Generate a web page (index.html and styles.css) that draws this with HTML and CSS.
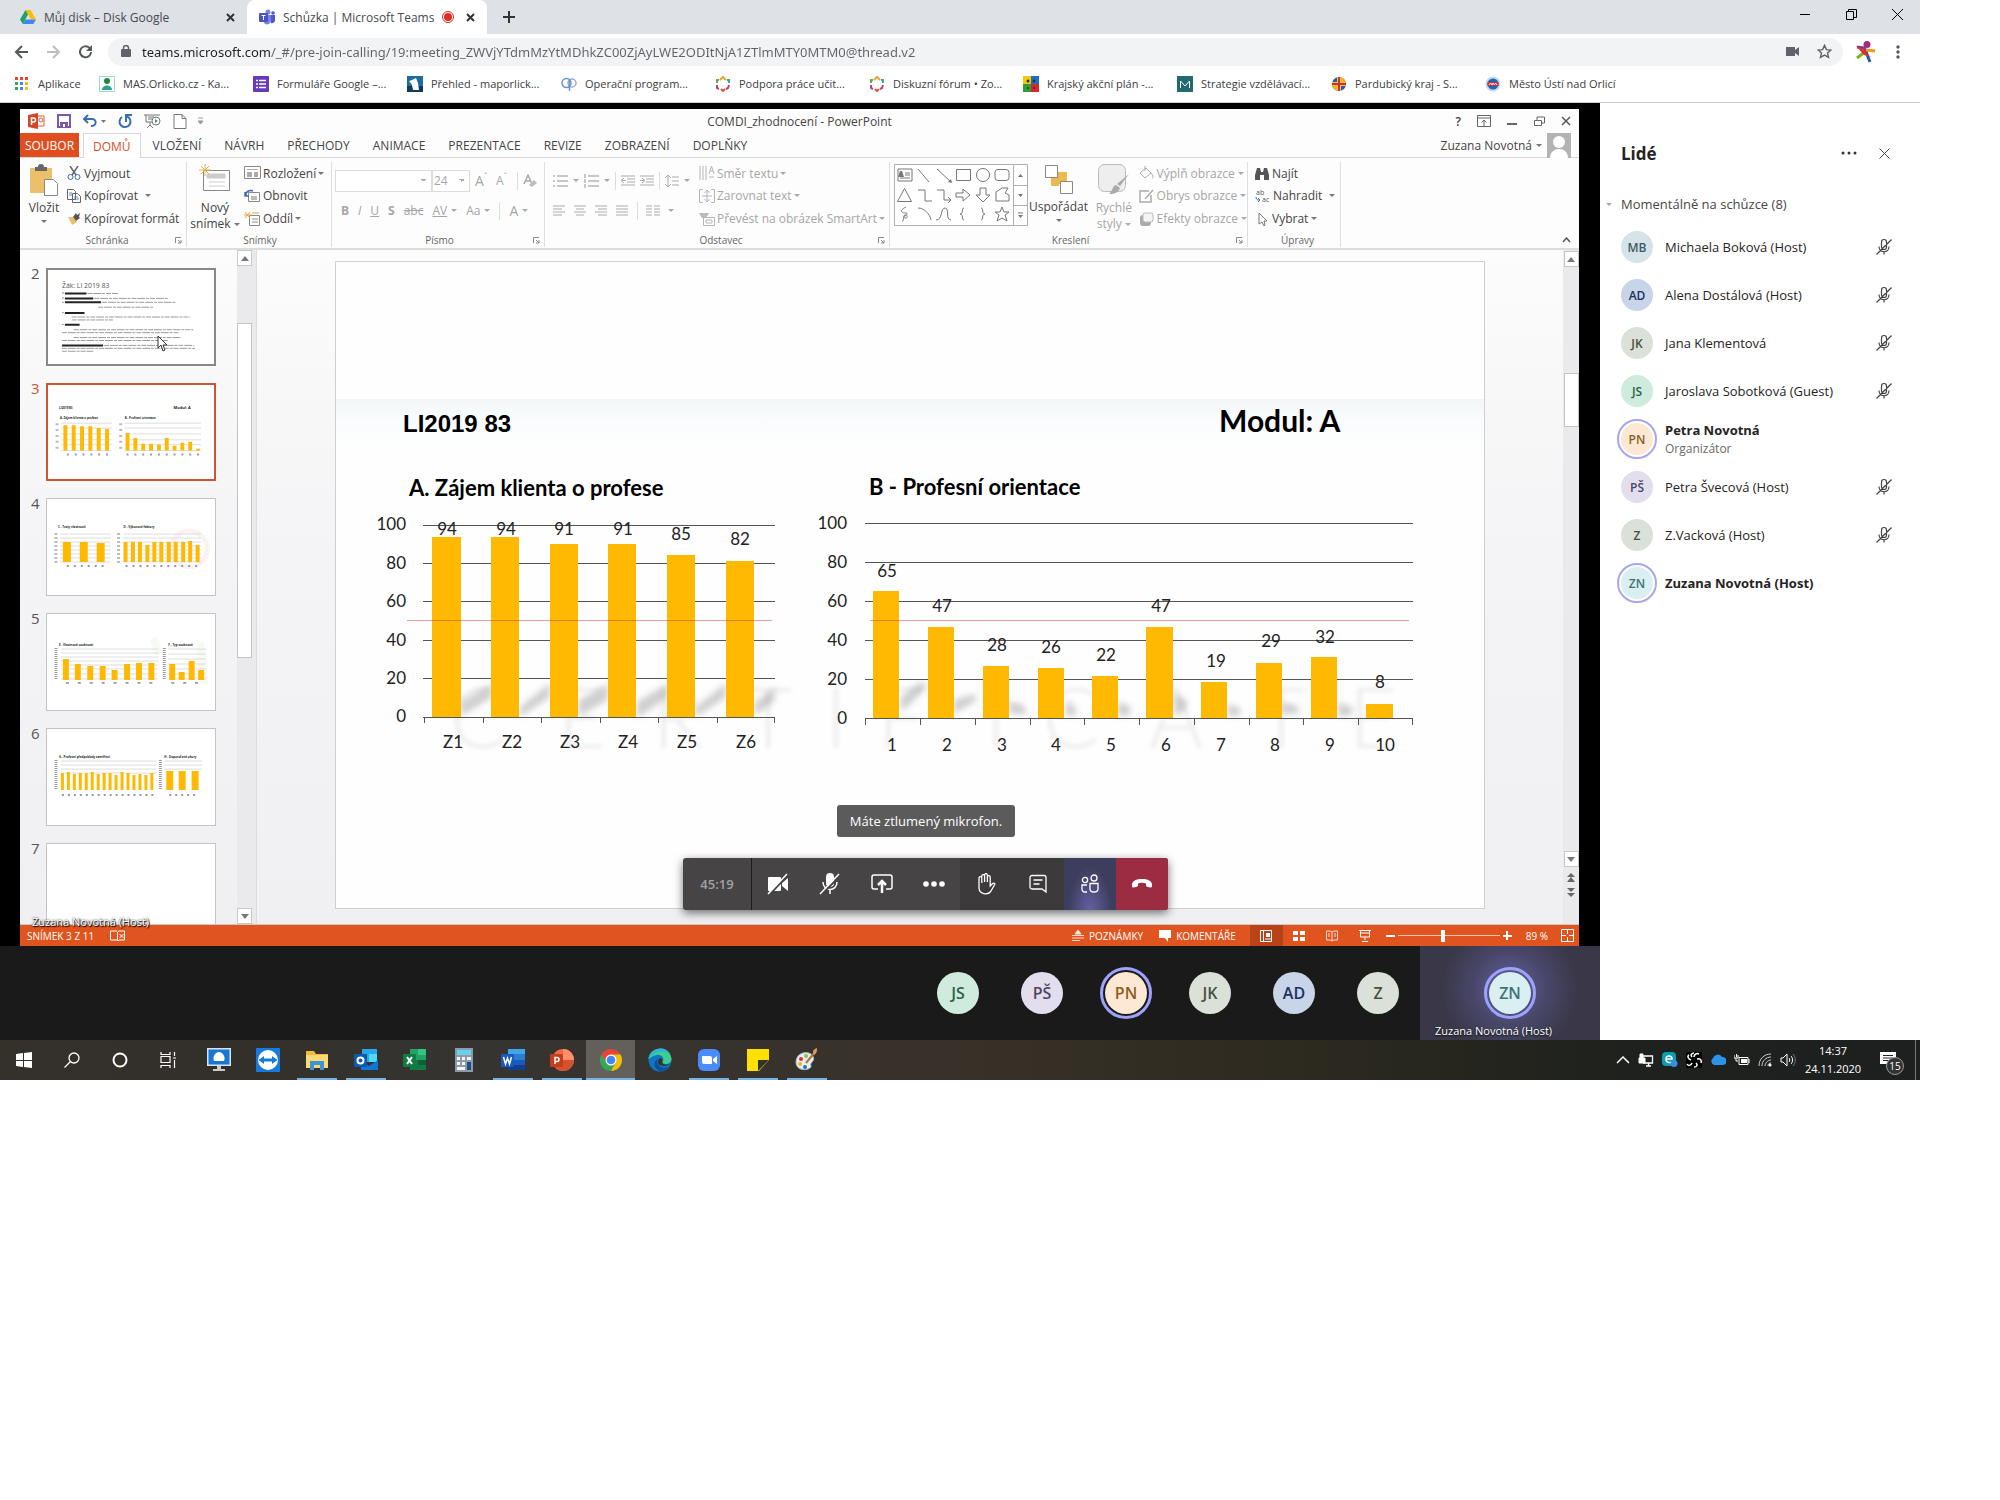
FILE: index.html
```html
<!DOCTYPE html>
<html lang="cs">
<head>
<meta charset="utf-8">
<title>Schůzka | Microsoft Teams</title>
<link rel="stylesheet" href="styles.css">
</head>
<body>
<svg class="defs" aria-hidden="true">
  <symbol id="mic-off" viewBox="0 0 18 18"><path d="M6.500 8V4a2.500 2.500 0 0 1 5 0v5a2.500 2.500 0 0 1-5 0zM4 8.500c0 7 10 7 10 0M9 14v2.500M1.500 16.500l15-15" fill="none" stroke="#444" stroke-width="1.200"/></symbol>
  <symbol id="flower" viewBox="0 0 16 16"><g fill="none" stroke-width="2"><path d="M5 4l3-3 3 3" stroke="#e9a13b"/><path d="M12 4h2v3" stroke="#3aa6a0"/><path d="M14 9l-1 3-2 1" stroke="#c2417c"/><path d="M10 13l-2 2-2-2" stroke="#d8593a"/><path d="M4 13l-2-1V9" stroke="#c2417c"/><path d="M2 7V4h2" stroke="#6aa84f"/></g></symbol>
  <symbol id="launcher" viewBox="0 0 7 7"><path d="M.5 6V.5H6M3 3l3 3M6 3v3H3" fill="none" stroke="#888"/></symbol>
</svg>
<div class="desktop">
  <header class="browser">
    <div class="tabstrip">
      <div class="tab">
        <svg width="16" height="16" viewBox="0 0 16 16"><path d="M5.500 1h5L16 10.500h-5z" fill="#fbbc04"/><path d="M5.500 1L8 5.500 2.800 15 0 10.500z" fill="#1ea362"/><path d="M5.200 10.500H16L13.300 15H2.800z" fill="#4285f4"/></svg>
        <span class="tab-title">Můj disk – Disk Google</span>
        <button class="x" aria-label="Zavřít kartu"><svg width="9" height="9"><path d="M1 1l7 7M8 1l-7 7" stroke="#333" stroke-width="2"/></svg></button>
      </div>
      <div class="tab active">
        <svg width="16" height="16" viewBox="0 0 16 16"><circle cx="9" cy="3" r="2.500" fill="#7b83eb"/><circle cx="14" cy="4" r="1.800" fill="#5059c9"/><path d="M11 6h5v5a3 3 0 0 1-4 3z" fill="#5059c9"/><path d="M5 6h7v6a4 4 0 0 1-7 2z" fill="#7b83eb"/><rect y="4" width="9" height="9" rx="1" fill="#4b53bc"/><path d="M2.500 6.500h4M4.500 6.500V11" stroke="#fff"/></svg>
        <span class="tab-title">Schůzka | Microsoft Teams</span>
        <svg class="rec" width="12" height="12"><circle cx="6" cy="6" r="5.500" fill="#fff" stroke="#d93025"/><circle cx="6" cy="6" r="4" fill="#d93025"/></svg>
        <button class="x" aria-label="Zavřít kartu"><svg width="9" height="9"><path d="M1 1l7 7M8 1l-7 7" stroke="#333" stroke-width="2"/></svg></button>
      </div>
      <button class="newtab" aria-label="Nová karta"><svg width="12" height="12"><path d="M6 0v12M0 6h12" stroke="#333" stroke-width="2"/></svg></button>
      <div class="wincontrols">
        <button aria-label="Minimalizovat"><svg width="11" height="11"><path d="M0 5.500h10" stroke="#000"/></svg></button>
        <button aria-label="Obnovit okno"><svg width="11" height="11"><path d="M.5 2.500h7v8h-7zM2.500 2.500v-2h8v8h-3" fill="none" stroke="#000"/></svg></button>
        <button aria-label="Zavřít okno"><svg width="11" height="11"><path d="M0 0l11 11M11 0L0 11" stroke="#000"/></svg></button>
      </div>
    </div>
    <div class="toolbar">
      <div class="navs">
        <button aria-label="Zpět"><svg width="15" height="14"><path d="M14 7H2M8 1L2 7l6 6" fill="none" stroke="#55585c" stroke-width="2"/></svg></button>
        <button aria-label="Vpřed"><svg width="15" height="14"><path d="M1 7h12M7 1l6 6-6 6" fill="none" stroke="#bcbec1" stroke-width="2"/></svg></button>
        <button aria-label="Načíst znovu"><svg width="15" height="15"><path d="M13 8A5.500 5.500 0 1 1 11 3.500L13 5.500" fill="none" stroke="#55585c" stroke-width="2"/><path d="M14 1v6H8z" fill="#55585c"/></svg></button>
      </div>
      <div class="omnibox">
        <svg width="10" height="13"><rect y="4" width="10" height="8" rx="1" fill="#5f6368"/><path d="M2.500 5V3a2.500 2.500 0 0 1 5 0v2" fill="none" stroke="#5f6368" stroke-width="1.500"/></svg>
        <input class="url" type="text" aria-label="Adresa" value="teams.microsoft.com/_#/pre-join-calling/19:meeting_ZWVjYTdmMzYtMDhkZC00ZjAyLWE2ODItNjA1ZTlmMTY0MTM0@thread.v2">
        <svg width="13" height="9"><path d="M0 0h9v3l4-3v9L9 6v3H0z" fill="#5f6368"/></svg>
        <svg class="star" width="15" height="15" viewBox="0 0 16 16"><path d="M8 1.500l2 4.500 4.800.4-3.600 3.200 1.100 4.700L8 11.800l-4.300 2.500 1.100-4.700L1.200 6.400 6 6z" fill="none" stroke="#5f6368" stroke-width="1.500"/></svg>
      </div>
      <svg class="profile" width="20" height="22" viewBox="0 0 20 22"><path d="M8 6l3 7M8 7L1 6" stroke="#7c3f98" stroke-width="3"/><circle cx="11" cy="3.500" r="3.500" fill="#a3297c"/><path d="M10 9l9 1" stroke="#f39c12" stroke-width="3"/><path d="M9 11l-8 6" stroke="#7ab51d" stroke-width="3"/><path d="M10 11l4 10" stroke="#2659a6" stroke-width="3"/><path d="M0 5l9 4 2 4 4 3-7-2z" fill="#e0312b"/></svg>
      <svg class="kebab" width="4" height="14"><g fill="#55585c"><circle cx="2" cy="2" r="1.700"/><circle cx="2" cy="7" r="1.700"/><circle cx="2" cy="12" r="1.700"/></g></svg>
    </div>
    <nav class="bookmarks">
      <a href="#" class="apps"><svg width="13" height="13"><g><path d="M0 0h3v3H0zM5 0h3v3H5zM10 0h3v3h-3z" fill="#ea4335"/><path d="M0 5h3v3H0zM0 10h3v3H0z" fill="#34a853"/><path d="M5 5h3v3H5zM5 10h3v3H5z" fill="#4285f4"/><path d="M10 5h3v3h-3zM10 10h3v3h-3z" fill="#fbbc04"/></g></svg>Aplikace</a>
      <a href="#"><svg width="16" height="16"><path d="M.5.5h15v15H.5z" fill="#fff" stroke="#9fd3d6"/><circle cx="8" cy="5" r="3" fill="#1a8a3a"/><path d="M3 14c0-6 10-6 10 0z" fill="#2aa09a"/></svg>MAS.Orlicko.cz - Ka...</a>
      <a href="#"><svg width="16" height="16"><rect width="16" height="16" rx="1" fill="#673ab7"/><path d="M3 4.500h2M3 8h2M3 11.500h2M6 4.500h7M6 8h7M6 11.500h7" stroke="#fff" stroke-width="1.500"/></svg>Formuláře Google –...</a>
      <a href="#"><svg width="16" height="16"><path d="M0 0h16v16H0z" fill="#1c6c9c"/><path d="M0 10h16v6H0z" fill="#123a5a"/><path d="M5 4l4-2 2 5 1 7H6L5 9 2 5z" fill="#fff"/></svg>Přehled - maporlick...</a>
      <a href="#"><svg width="16" height="16"><circle cx="5.500" cy="7" r="4.500" fill="none" stroke="#6f93cc" stroke-width="1.500"/><circle cx="11" cy="7" r="4" fill="none" stroke="#8fb0dd" stroke-width="1.500"/><path d="M8.500 3v12" stroke="#6f93cc" stroke-width="1.500"/></svg>Operační program...</a>
      <a href="#"><svg width="16" height="16"><use href="#flower"/></svg>Podpora práce učit...</a>
      <a href="#"><svg width="16" height="16"><use href="#flower"/></svg>Diskuzní fórum • Zo...</a>
      <a href="#"><svg width="16" height="16"><path d="M0 0h8v8H0z" fill="#f2c80f"/><path d="M8 0h8v8H8z" fill="#1f6fc0"/><path d="M0 8h8v8H0z" fill="#2f9e3a"/><path d="M8 8h8v8H8z" fill="#d8262c"/><g fill="#333"><circle cx="5" cy="5" r="1.500"/><circle cx="11" cy="5" r="1.500"/><circle cx="5" cy="12" r="1"/><circle cx="11" cy="12" r="1"/></g></svg>Krajský akční plán -...</a>
      <a href="#"><svg width="16" height="16"><path d="M0 0h16v16H0z" fill="#216a72"/><path d="M3.500 12V5L8 10l4.500-5v7" fill="none" stroke="#fff"/></svg>Strategie vzdělávací...</a>
      <a href="#"><svg width="16" height="16"><circle cx="8" cy="8" r="7" fill="#2262a8"/><path d="M8 1a7 7 0 0 1 7 7H8zM8 15a7 7 0 0 1-7-7h7z" fill="#f0b323"/><path d="M8 1v14M1 8h14" stroke="#f3c84a" stroke-width="4"/><path d="M8 1v14M1 8h14" stroke="#cf2e2e" stroke-width="2"/></svg>Pardubický kraj - S...</a>
      <a href="#"><svg width="16" height="16"><circle cx="8" cy="8" r="7.500" fill="#bcdcf2"/><circle cx="8" cy="8" r="5.500" fill="#2a62ad"/><path d="M2.500 6h11v4h-11z" fill="#cf2e3e"/><path d="M4 9l1.500-2L7 9l1-2 1.500 2 1-2L12 9" stroke="#fff" fill="none"/></svg>Město Ústí nad Orlicí</a>
    </nav>
  </header>

  <main class="meeting">
    <section class="stage">
      <div class="share">
        <div class="pp-title">
          <div class="qat">
            <svg width="18" height="16"><path d="M9 3h7v10H9z" fill="#fff" stroke="#d9603a"/><path d="M0 2l10-2v16L0 14z" fill="#d24726"/><path d="M3.500 12V5h2a2 2 0 0 1 0 4h-2" fill="none" stroke="#fff" stroke-width="1.500"/><circle cx="13" cy="7" r="2" fill="none" stroke="#d9603a"/></svg>
            <svg width="14" height="14"><path d="M1 1h12v12H1z" fill="none" stroke="#7a5ba5" stroke-width="2"/><path d="M3 8h8v5H3z" fill="#7a5ba5"/><path d="M6 10h2v3H6z" fill="#fff"/></svg>
            <svg width="24" height="14"><path d="M2 5h8c5 0 5 7-1 7M6 1L2 5l4 4" fill="none" stroke="#3b6eb0" stroke-width="2"/><path d="M19 6h5l-2.500 3z" fill="#777"/></svg>
            <svg width="16" height="15"><path d="M10 2.500A5.500 5.500 0 1 1 5 3" fill="none" stroke="#3b6eb0" stroke-width="2"/><path d="M9 8V1h6" fill="none" stroke="#3b6eb0" stroke-width="2"/></svg>
            <svg width="18" height="15"><path d="M0 1h16M2 1v7h7M6 8v4M3 14l3-3 3 3M4 3h6M4 5h4" fill="none" stroke="#777"/><circle cx="12" cy="7" r="4" fill="#fff" stroke="#777"/><path d="M11 5l3 2-3 2z" fill="#4a9a6a"/></svg>
            <svg width="14" height="15"><path d="M1 .5h8l4 4v10H1zM9 .5v4h4" fill="#fff" stroke="#777"/></svg>
            <svg width="6" height="8"><path d="M0 1h5M0 4h5L2.500 7z" stroke="#999" fill="#999"/></svg>
          </div>
          <span class="pp-name">COMDI_zhodnocení - PowerPoint</span>
          <div class="pp-win">
            <span class="q">?</span>
            <svg width="14" height="12"><path d="M.5.5h13v11H.5zM.5 3h13M7 11V5M4.500 7.500L7 5l2.500 2.500" fill="none" stroke="#666"/></svg>
            <svg width="11" height="12"><path d="M0 9h10" stroke="#666" stroke-width="2"/></svg>
            <svg width="11" height="11"><path d="M.5 4.500h7v5h-7zM3 4V1h7.500v6H8" fill="none" stroke="#666"/></svg>
            <svg width="10" height="10"><path d="M1 1l8 8M9 1L1 9" stroke="#555" stroke-width="1.500"/></svg>
          </div>
        </div>
        <nav class="pp-tabs">
          <button class="file">SOUBOR</button><button class="on">DOMŮ</button><button>VLOŽENÍ</button><button>NÁVRH</button><button>PŘECHODY</button><button>ANIMACE</button><button>PREZENTACE</button><button>REVIZE</button><button>ZOBRAZENÍ</button><button>DOPLŇKY</button>
          <div class="user">Zuzana Novotná <i class="caret"></i><svg width="24" height="25"><path d="M0 0h24v25H0z" fill="#b3b3b3"/><circle cx="12" cy="9" r="6" fill="#fff"/><path d="M3 25c0-12 18-12 18 0z" fill="#fff"/></svg></div>
        </nav>
        <div class="ribbon">
          <section class="group g-clip">
            <div class="cols">
              <button class="big"><svg width="30" height="32"><path d="M1 4h22v25H1z" fill="#ecc06a"/><path d="M6 3h3a3 3 0 0 1 6 0h3v4H6z" fill="#666"/><path d="M15.500 15.500h9l4 4v12h-13z" fill="#fff" stroke="#888"/></svg>Vložit<i class="caret"></i></button>
              <div class="list">
                <button><svg width="14" height="14"><path d="M3 0l6 9M11 0L5 9" stroke="#666" stroke-width="1.500"/><circle cx="3.500" cy="11" r="2.500" fill="none" stroke="#3b6eb0"/><circle cx="10.500" cy="11" r="2.500" fill="none" stroke="#3b6eb0"/></svg>Vyjmout</button>
                <button><svg width="14" height="14"><path d="M.5.5h6l2 2v8h-8zM5.500 4.500h5l3 3v6h-8z" fill="#fff" stroke="#666"/><path d="M7 8h4M7 10h5M2 4h3M2 6h3" stroke="#5c8ac0"/></svg>Kopírovat <i class="caret far"></i></button>
                <button><svg width="14" height="14"><path d="M1 5l5 0 4 5-5 3z" fill="#ecc06a"/><path d="M6 5l3-4 1 2 3-2-1 4 1 1-4 3z" fill="#555"/></svg>Kopírovat formát</button>
              </div>
            </div>
            <footer>Schránka<svg class="launch" width="7" height="7"><use href="#launcher"/></svg></footer>
          </section>
          <section class="group g-slides">
            <div class="cols">
              <button class="big two"><svg width="32" height="32"><path d="M4.500 6.500h26v20h-26z" fill="#fff" stroke="#888"/><path d="M8 10h18v4H8zM10 18h16M10 22h16" fill="#ccc" stroke="#ccc"/><path d="M6 0v12M0 6h12M2 2l8 8M10 2l-8 8" stroke="#e5b24a"/></svg><span>Nový<br>snímek <i class="caret"></i></span></button>
              <div class="list">
                <button><svg width="17" height="14"><path d="M.5.5h16v12H.5z" fill="#fff" stroke="#888"/><path d="M3 3h11v1H3zM3 6h5v5H3zM10 6h4v5h-4z" fill="#aaa"/></svg>Rozložení <i class="caret"></i></button>
                <button><svg width="17" height="14"><path d="M4.500 3.500h11v9h-11z" fill="#fff" stroke="#888"/><path d="M7 7h6v4H7z" fill="#bbb"/><path d="M2 7C1 2 6 1 9 2M1 3v4h4" fill="none" stroke="#3b6eb0" stroke-width="1.500"/></svg>Obnovit</button>
                <button><svg width="17" height="14"><path d="M5.500 3.500h10v10h-10zM8 7h6M8 10h6" fill="#fff" stroke="#888"/><path d="M0 3h8M1 0l5 6M6 0L1 6M8 1h7" stroke="#e5a23a"/></svg>Oddíl <i class="caret"></i></button>
              </div>
            </div>
            <footer>Snímky</footer>
          </section>
          <section class="group g-font dim">
            <div class="rows">
              <div class="r"><select class="font" aria-label="Písmo"><option></option></select><select class="size" aria-label="Velikost písma"><option>24</option></select><span class="ic w1">A<sup>ˆ</sup></span><span class="ic w1 sm">A<sup>ˇ</sup></span><i class="bar"></i><svg width="14" height="14"><path d="M1 10L5 1l4 9M2.500 7h5" fill="none" stroke="#aaa" stroke-width="1.500"/><path d="M6 11l5-5 3 3-5 4z" fill="#bbb"/></svg></div>
              <div class="r r2"><b>B</b><em>I</em><u>U</u><b>S</b><s>abc</s><span class="av">AV</span><i class="caret"></i><span>Aa</span><i class="caret"></i><i class="bar"></i><span class="big-a">A</span><i class="caret"></i></div>
            </div>
            <footer>Písmo<svg class="launch" width="7" height="7"><use href="#launcher"/></svg></footer>
          </section>
          <section class="group g-para dim">
            <div class="cols">
              <div class="rows">
                <div class="r"><svg width="15" height="14"><path d="M0 2h2M0 7h2M0 12h2M4 2h11M4 7h11M4 12h11" stroke="#b5b5b5" stroke-width="1.500"/></svg><i class="caret"></i><svg width="15" height="14"><path d="M1 0v4M1 5v4M1 10v4M4 2h11M4 7h11M4 12h11" stroke="#b5b5b5" stroke-width="1.500"/></svg><i class="caret"></i><i class="bar"></i><svg width="14" height="11"><path d="M0 1h14M6 4h8M6 7h8M0 10h14M5 5.500H1M3 3L0 5.500 3 8" fill="none" stroke="#aaa"/></svg><svg width="14" height="11"><path d="M0 1h14M6 4h8M6 7h8M0 10h14M0 5.500h4M2 3l3 2.500L2 8" fill="none" stroke="#aaa"/></svg><i class="bar"></i><svg width="14" height="14"><path d="M3 1v12M0 4l3-3 3 3M0 10l3 3 3-3M7 3h7M7 7h7M7 11h7" fill="none" stroke="#aaa"/></svg><i class="caret"></i></div>
                <div class="r r3"><svg width="13" height="11"><path d="M0 1h12M0 4h9M0 7h12M0 10h9" stroke="#aaa"/></svg><svg width="13" height="11"><path d="M0 1h12M2 4h8M0 7h12M2 10h8" stroke="#aaa"/></svg><svg width="13" height="11"><path d="M0 1h12M3 4h9M0 7h12M3 10h9" stroke="#aaa"/></svg><svg width="13" height="11"><path d="M0 1h12M0 4h12M0 7h12M0 10h12" stroke="#aaa"/></svg><i class="bar"></i><svg width="14" height="11"><path d="M0 1h6M0 4h6M0 7h6M0 10h6M8 1h6M8 4h6M8 7h6M8 10h6" stroke="#aaa"/></svg><i class="caret"></i></div>
              </div>
              <div class="list">
                <button><svg width="16" height="16"><path d="M1 1v14M4 1v14M7 1v14M10 9l2.500-8L15 9M11 6h3M10 12h5" fill="none" stroke="#b5b5b5"/></svg>Směr textu <i class="caret"></i></button>
                <button><svg width="16" height="14"><path d="M4 .5H.5v13H4M12 .5h3.500v13H12M8 1v12M5.500 4L8 1l2.500 3M5.500 10L8 13l2.500-3M3 7h10" fill="none" stroke="#b5b5b5"/></svg>Zarovnat text <i class="caret"></i></button>
                <button><svg width="16" height="14"><path d="M0 1h10l-3 5H3z" fill="#bbb"/><path d="M4.500 5.500h11v8h-11zM7 8h6v3H7z" fill="#fff" stroke="#b5b5b5"/></svg>Převést na obrázek SmartArt <i class="caret"></i></button>
              </div>
            </div>
            <footer>Odstavec<svg class="launch" width="7" height="7"><use href="#launcher"/></svg></footer>
          </section>
          <section class="group g-draw">
            <div class="cols">
              <svg class="gallery" width="134" height="62"><path d="M.5.5h133v61H.5zM119.500.5v61M119.500 21.500h14M119.500 41.500h14" fill="#fff" stroke="#b0b0b0"/><g fill="none" stroke="#777"><path d="M4 5h14v12H4zM11 9h5M11 11h5M6 14h10M24 5l11 13M43 5l14 13M62.500 5.500h14v11h-14zM104 5.500h8a3 3 0 0 1 3 3v5a3 3 0 0 1-3 3h-8a3 3 0 0 1-3-3v-5a3 3 0 0 1 3-3z"/><circle cx="89" cy="11" r="6.500"/><path d="M3.500 37.500h14l-7-13zM24 26h7v11h7M43 26h7v10h6M54 33l3 3-3 3M62 29h7v-4l7 6-7 6v-4h-7zM86 24v7h-4l7 7 7-7h-4v-7zM102 37V28l6-4h6l-3 5 4 2v6z"/><path d="M12 43c-8 4-4 6 0 6s-4 4-1 5 3-4 0-3 0 6-3 6M24 44c6 0 12 6 13 12M42 56c7 0 4-12 9-12s0 12 6 12M70 44c-3 0 0 6-4 6 4 0 1 6 4 6M87 44c3 0 0 6 4 6-4 0-1 6-4 6M108 43l2 5h5l-4 3 2 6-5-3-5 3 2-6-4-3h5z"/></g><path d="M6 7h2l2 6H4zM124 13h5l-2.500-3zM124 30h5l-2.500 3zM124 51h5l-2.500 3zM124 48.500h5v1h-5zM54 18l4 1-1-4z" fill="#777"/></svg>
              <button class="big arrange"><svg width="30" height="31"><path d="M13 8h10v12H13zM7 14h8v8H7z" fill="#ecb94f"/><path d="M1.500 1.500h12v12h-12zM16.500 17.500h12v12h-12z" fill="#fff" stroke="#888"/></svg>Uspořádat<i class="caret"></i></button>
              <button class="big two dim"><svg width="32" height="32"><rect x=".5" y=".5" width="27" height="27" rx="6" fill="#eee" stroke="#bbb"/><path d="M31 10l-9 12-3-2zM18 21l4 3c-2 6-8 6-11 6 4-3 3-8 7-9z" fill="#aaa"/></svg><span>Rychlé<br>styly <i class="caret"></i></span></button>
              <div class="list dim">
                <button><svg width="15" height="14"><path d="M7 2l5 5-6 5-5-5zM6 0v5M12 7c3 3 2 5 1 5" fill="none" stroke="#aaa"/></svg>Výplň obrazce <i class="caret"></i></button>
                <button><svg width="15" height="14"><path d="M10 2H1v11h11V6M14 1L6 10" fill="none" stroke="#aaa" stroke-width="1.500"/></svg>Obrys obrazce <i class="caret"></i></button>
                <button><svg width="15" height="14"><rect x="1" y="3" width="11" height="11" rx="3" fill="#aaa"/><rect x="4" y="1" width="10" height="9" rx="2" fill="#f4f4f4" stroke="#bbb"/></svg>Efekty obrazce <i class="caret"></i></button>
              </div>
            </div>
            <footer>Kreslení<svg class="launch" width="7" height="7"><use href="#launcher"/></svg></footer>
          </section>
          <section class="group g-edit">
            <div class="cols">
              <div class="list">
                <button><svg width="14" height="13"><path d="M2 1h3l1 4h2l1-4h3l2 7v5H9V8H5v5H0V8z" fill="#555"/></svg>Najít</button>
                <button><svg width="15" height="18"><text x="1" y="8" font-size="7" fill="#555">ab</text><text x="7" y="15" font-size="7" fill="#555">ac</text><path d="M1 10c0 3 2 3 4 3M3 11l2 2-2 2" fill="none" stroke="#3b6eb0"/></svg>Nahradit <i class="caret far"></i></button>
                <button><svg width="14" height="14"><path d="M4 1v11l3-2 2 4 1-1-1-4h3z" fill="#fff" stroke="#777"/></svg>Vybrat <i class="caret"></i></button>
              </div>
            </div>
            <footer>Úpravy</footer>
          </section>
          <button class="collapse" aria-label="Sbalit pás karet"><svg width="9" height="6"><path d="M1 5l3.500-4L8 5" fill="none" stroke="#555" stroke-width="1.500"/></svg></button>
        </div>

        <div class="work">
          <div class="thumbs">
            <ol start="2">
              <li><span>2</span><svg class="hover" viewBox="0 0 169 96"><text class="th" x="14" y="18">Žák: LI 2019 83</text><g stroke="#222" stroke-width="2"><path d="M17 24h22M17 29h29M17 33h37M17 44h20M17 56h15M14 77h42"/></g><g stroke="#999" stroke-dasharray="5 1 8 1 3 1"><path d="M40 24h31M47 29h75M55 33h75M51 38h57M24 48h121M24 51h42M26 61h122M14 64h120M26 69h110M14 72h108M57 77h92M14 80h136M14 83h32"/></g><g fill="#555"><circle cx="15" cy="23.500" r=".7"/><circle cx="15" cy="28.500" r=".7"/><circle cx="15" cy="33" r=".7"/><circle cx="15" cy="43.500" r=".7"/><circle cx="15" cy="55.500" r=".7"/></g></svg></li>
              <li class="sel"><span>3</span><svg viewBox="0 0 169 96"><text class="ts" x="11" y="25">LI2019 83</text><text class="tm" x="128" y="25">Modul: A</text><text class="ts" x="12" y="35">A. Zájem klienta o profese</text><text class="ts" x="78" y="35">B - Profesní orientace</text><path d="M13 39h52M13 44h52M13 50h52M13 56h52M13 61h52M13 67h52M78 39h78M78 44h78M78 50h78M78 56h78M78 61h78M78 67h78" stroke="#ddd"/><path d="M17.500 67V41M26 67V41M34.500 67V42M43 67V42M51.500 67V44M60 67V45" stroke="#ffb900" stroke-width="4"/><path d="M81 67V49M89 67V54M97 67V60M105 67V60M113 67V61M121 67V54M129 67V62M137 67V59M145 67V58M153 67V65" stroke="#ffb900" stroke-width="4"/><path d="M9 39v29M74 39v29" stroke="#bbb" stroke-dasharray="2 4" stroke-width="3"/><path d="M19 71h46M80 71h76" stroke="#999" stroke-dasharray="2 6" stroke-width="2"/></svg></li>
              <li><span>4</span><svg viewBox="0 0 169 96"><circle cx="143" cy="50" r="18" fill="none" stroke="#fbf2f2" stroke-width="5"/><text class="ts" x="11" y="29">C - Testy vlastností</text><text class="ts" x="77" y="29">D - Výkonové faktory</text><path d="M13 35h51M13 39h51M13 43h51M13 47h51M13 51h51M13 55h51M13 59h51M13 63h51M77 35h78M77 39h78M77 43h78M77 47h78M77 51h78M77 55h78M77 59h78M77 63h78" stroke="#ddd"/><path d="M20 63V43M37 63V43M54 63V44" stroke="#ffb900" stroke-width="8"/><path d="M79 63V43M86.500 63V43M93.500 63V43M101 63V46M108 63V43M115 63V43M122.500 63V43M129.500 63V43M137 63V43M144 63V42M151.500 63V46" stroke="#ffb900" stroke-width="4"/><path d="M9 34v30M72 34v30" stroke="#bbb" stroke-dasharray="2 2" stroke-width="3"/><path d="M20 67h38M79 67h75" stroke="#999" stroke-dasharray="2 5" stroke-width="2"/></svg></li>
              <li><span>5</span><svg viewBox="0 0 169 96"><path d="M107 24l6 16M154 28l4 42" stroke="#f5faf3" stroke-width="8"/><text class="ts" x="12" y="32">E - Vlastnosti osobnosti</text><text class="ts" x="122" y="32">F - Typ osobnosti</text><path d="M14 35h98M14 39h98M14 43h98M14 47h98M14 51h98M14 55h98M14 60h98M14 65h98M122 35h38M122 40h38M122 45h38M122 50h38M122 55h38M122 60h38M122 65h38" stroke="#ddd"/><path d="M19 66V45M31 66V50M43.500 66V52M56 66V52M68 66V56M80.500 66V50M92.500 66V49M105 66V49M126 66V50M135.500 66V58M145.500 66V47M155 66V56" stroke="#ffb900" stroke-width="6"/><path d="M9 34v32M118 34v32" stroke="#999" stroke-dasharray="1 1" stroke-width="3"/><path d="M19 69h90M125 69h34" stroke="#999" stroke-dasharray="3 9" stroke-width="2"/></svg></li>
              <li><span>6</span><svg viewBox="0 0 169 96"><text class="ts" x="12" y="29">G - Profesní předpoklady zaměření</text><text class="ts" x="118" y="29">H - Doporučené obory</text><path d="M14 32h96M14 36h96M14 40h96M14 44h96M118 32h38M118 36h38M118 40h38" stroke="#ddd"/><path d="M15.500 61V44M21.500 61V43M27.500 61V45M33.500 61V44M39.500 61V44M45.500 61V43M51.500 61V45M57.500 61V44M63.500 61V44M69.500 61V46M75.500 61V43M81.500 61V44M87.500 61V46M93.500 61V45M99.500 61V46M105.500 61V44" stroke="#ffb900" stroke-width="3"/><path d="M123.500 61V42M136 61V42M149 61V42" stroke="#ffb900" stroke-width="7"/><path d="M9 31v30M114 31v30" stroke="#999" stroke-dasharray="1 1" stroke-width="3"/><path d="M15 66h92M123 66h28" stroke="#999" stroke-dasharray="2 4" stroke-width="2"/></svg></li>
              <li><span>7</span><svg viewBox="0 0 169 96"></svg></li>
            </ol>
            <svg class="cursor" width="11" height="17"><path d="M1 1v12l3-3 2 6 2-1-2-5h4z" fill="#fff" stroke="#333"/></svg>
          </div>
          <div class="vscroll left"><button aria-label="Nahoru"><svg width="8" height="5"><path d="M0 5h8L4 0z" fill="#777"/></svg></button><i class="grip"></i><button class="end" aria-label="Dolů"><svg width="8" height="5"><path d="M0 0h8L4 5z" fill="#777"/></svg></button></div>
          <div class="canvas">
            <svg class="slide" viewBox="0 0 1148 646">
              <defs>
                <linearGradient id="band" x2="0" y2="1"><stop offset="0" stop-color="#f3f5f6"/><stop offset=".3" stop-color="#f8fbfc"/><stop offset="1" stop-color="#fefefe"/></linearGradient>
                <filter id="soft"><feGaussianBlur stdDeviation="3"/></filter>
                <filter id="softer"><feGaussianBlur stdDeviation="2"/></filter>
              </defs>
              <rect width="1148" height="646" fill="#fefefe"/>
              <rect y="137" width="1148" height="50" fill="url(#band)"/>
              <g class="ghost" filter="url(#softer)"><text x="142" y="486">C</text><text x="246" y="486">E</text><text x="342" y="486">R</text><text x="432" y="486">T</text><text x="500" y="486">I</text><text x="565" y="486">F</text><text x="660" y="486">I</text><text x="735" y="486">C</text><text x="840" y="486">A</text><text x="945" y="486">T</text><text x="1037" y="486">E</text></g>
              <g class="shade" filter="url(#soft)"><path d="M125 440l30-18v14l-30 18zM184 445l30-24v14l-30 20zM243 438l29-16v16l-29 16zM301 440l30-18v14l-30 20zM360 445l30-24v14l-30 20zM419 440l20-14v12l-20 16z"/><path d="M564 436l20-16 8 4-26 26zM618 438l20-6 3 6-23 14zM672 440l14 2 6 10H674zM730 438l10 8v8h-10zM782 440l12 4v10h-12zM838 432l14 8-6 12h-8zM892 442l12 4v8h-12zM946 440l16 4v8h-16zM1002 440l16 6-4 8h-12z"/></g>
              <g class="grid"><path d="M87 263.500h352M87 301.500h352M87 339.500h352M87 378.500h352M87 416.500h352M87 455.500h352M88.500 455v6M147.500 455v6M205.500 455v6M264.500 455v6M322.500 455v6M381.500 455v6M438.500 455v6"/><path d="M529 261.500h548M529 300.500h548M529 339.500h548M529 378.500h548M529 417.500h548M529 456.500h548M529.500 456v7M584.500 456v7M639.500 456v7M694.500 456v7M748.500 456v7M803.500 456v7M858.500 456v7M913.500 456v7M967.500 456v7M1022.500 456v7M1076.500 456v7"/></g>
              <g fill="#ffb900"><path d="M96 275h29v180H96zM155 275h28v180h-28zM214 282h28v173h-28zM272 282h28v173h-28zM331 293h28v162h-28zM390 299h28v156h-28z"/><path d="M537 329h26v127h-26zM592 365h26v91h-26zM647 404h26v52h-26zM702 406h26v50h-26zM756 414h26v42h-26zM810 365h27v91h-27zM865 420h26v36h-26zM920 401h26v55h-26zM975 395h26v61h-26zM1030 442h27v14h-27z"/></g>
              <path d="M71 358.500h365M534 358.500h539" stroke="#d0403a" stroke-opacity=".5"/>
              <text class="s-id" x="67" y="170">LI2019 83</text><text class="s-mod" x="883" y="170">Modul: A</text>
              <text class="s-h" x="73" y="234">A. Zájem klienta o profese</text><text class="s-h" x="533" y="233">B - Profesní orientace</text>
              <g class="lab end"><text x="70" y="268">100</text><text x="70" y="307">80</text><text x="70" y="345">60</text><text x="70" y="384">40</text><text x="70" y="422">20</text><text x="70" y="460">0</text><text x="511" y="267">100</text><text x="511" y="306">80</text><text x="511" y="345">60</text><text x="511" y="384">40</text><text x="511" y="423">20</text><text x="511" y="462">0</text></g>
              <g class="lab"><text x="111" y="273">94</text><text x="170" y="273">94</text><text x="228" y="273">91</text><text x="287" y="273">91</text><text x="345" y="278">85</text><text x="404" y="283">82</text>
              <text x="117" y="486">Z1</text><text x="176" y="486">Z2</text><text x="234" y="486">Z3</text><text x="292" y="486">Z4</text><text x="351" y="486">Z5</text><text x="410" y="486">Z6</text>
              <text x="551" y="315">65</text><text x="606" y="350">47</text><text x="661" y="389">28</text><text x="715" y="391">26</text><text x="770" y="399">22</text><text x="825" y="350">47</text><text x="880" y="405">19</text><text x="935" y="385">29</text><text x="989" y="381">32</text><text x="1044" y="426">8</text>
              <text x="556" y="489">1</text><text x="611" y="489">2</text><text x="666" y="489">3</text><text x="720" y="489">4</text><text x="775" y="489">5</text><text x="830" y="489">6</text><text x="885" y="489">7</text><text x="939" y="489">8</text><text x="994" y="489">9</text><text x="1049" y="489">10</text></g>
            </svg>
          </div>
          <div class="vscroll right"><button aria-label="Nahoru"><svg width="8" height="5"><path d="M0 5h8L4 0z" fill="#777"/></svg></button><i class="grip"></i><button class="end" aria-label="Dolů"><svg width="8" height="5"><path d="M0 0h8L4 5z" fill="#777"/></svg></button><svg class="pg" width="8" height="9"><path d="M0 4h8L4 0zM0 9h8L4 4z" fill="#666"/></svg><svg class="pg" width="8" height="9"><path d="M0 0h8L4 4zM0 5h8L4 9z" fill="#666"/></svg></div>
        </div>
        <div class="status">
          <span>SNÍMEK 3 Z 11</span>
          <svg width="15" height="12"><path d="M7 1H.5v9H7l1 1 1-1h5.500V1H9L7.500 2v9M9.500 4l4 4M13.500 4l-4 4" fill="none" stroke="#fff"/></svg>
          <div class="st-right">
            <button class="notes"><svg width="12" height="12"><path d="M3 4h6L6 0zM0 5.500h12M0 8h12M0 10.500h8" fill="#fff" stroke="#fbd9cc"/></svg>POZNÁMKY</button>
            <button class="comments"><svg width="12" height="12"><path d="M0 0h12v8H9v4L6 8H0z" fill="#fff"/></svg>KOMENTÁŘE</button>
            <button class="view on" aria-label="Normální"><svg width="12" height="12"><path d="M.5.5h11v11H.5zM3.500.5v11M5 9h6" fill="none" stroke="#fff"/><path d="M6 3h4v4H6z" fill="#fff"/></svg></button>
            <button class="view" aria-label="Řazení snímků"><svg width="12" height="12"><path d="M0 1h5v4H0zM7 1h5v4H7zM0 7h5v4H0zM7 7h5v4H7z" fill="#fff"/></svg></button>
            <button class="view" aria-label="Zobrazení pro čtení"><svg width="12" height="12"><path d="M.5 1H4l2 1 2-1h3.500v9H8l-2 1-2-1H.500zM6 2v9M2 4h2M2 6h2M8 4h2M8 6h2" fill="none" stroke="#fbd9cc"/></svg></button>
            <button class="view" aria-label="Prezentace"><svg width="12" height="12"><path d="M0 .5h12M1.500 1v6h9V1M6 7v3M3 11.500h6M2 3h8" fill="none" stroke="#fff"/></svg></button>
            <span class="pm minus"></span><input type="range" class="zoom" aria-label="Lupa" min="10" max="190" value="89"><span class="pm plus"></span>
            <span class="pct">89 %</span>
            <svg width="13" height="13"><path d="M.5.5h12v12H.5zM6.500 1v4M6.500 8v4M1 6.500h4M8 6.500h4" fill="none" stroke="#fff"/></svg>
          </div>
        </div>
      </div>
      <span class="sharer">Zuzana Novotná (Host)</span>
      <div class="filmstrip">
        <span class="face js">JS</span><span class="face ps">PŠ</span><span class="face pn ring">PN</span><span class="face jk">JK</span><span class="face ad">AD</span><span class="face z">Z</span>
        <div class="speaker"><span class="face zn ring">ZN</span><p>Zuzana Novotná (Host)</p></div>
      </div>
      <div class="tip" role="tooltip">Máte ztlumený mikrofon.</div>
      <div class="callbar">
        <span class="time">45:19</span>
        <button aria-label="Kamera"><svg width="24" height="22"><path d="M3 4h11a1 1 0 0 1 1 1v12a1 1 0 0 1-1 1H3a1 1 0 0 1-1-1V5a1 1 0 0 1 1-1zM16 10l6-5v13l-6-5z" fill="#fff"/><path d="M4 21L22 2" stroke="#464445" stroke-width="2"/><path d="M2 21L21 1" stroke="#fff" stroke-width="1.500"/></svg></button>
        <button aria-label="Mikrofon"><svg width="22" height="22"><rect x="7" y="0" width="8" height="14" rx="4" fill="#fff"/><path d="M4 9c0 10 14 10 14 0M11 17v4" fill="none" stroke="#fff" stroke-width="1.500"/><path d="M2 22L21 3" stroke="#464445" stroke-width="2"/><path d="M1 21L20 1" stroke="#fff" stroke-width="1.500"/></svg></button>
        <button aria-label="Sdílet"><svg width="22" height="22"><path d="M7 16H3a2 2 0 0 1-2-2V4a2 2 0 0 1 2-2h16a2 2 0 0 1 2 2v10a2 2 0 0 1-2 2h-4" fill="none" stroke="#fff" stroke-width="1.500"/><path d="M11 20V9M7 12l4-4 4 4" fill="none" stroke="#fff" stroke-width="2.500"/></svg></button>
        <button aria-label="Další akce"><svg width="22" height="6"><g fill="#fff"><circle cx="3" cy="3" r="2.800"/><circle cx="11" cy="3" r="2.800"/><circle cx="19" cy="3" r="2.800"/></g></svg></button>
        <button class="dark" aria-label="Zvednout ruku"><svg width="20" height="22"><path d="M3 12V5a1.400 1.400 0 0 1 2.800 0v5M5.800 9V3a1.400 1.400 0 0 1 2.800 0v6M8.600 9V2a1.400 1.400 0 0 1 2.800 0v7M11.400 9V4a1.400 1.400 0 0 1 2.800 0v9l2.500-2.500c1-1 2.500 0 2 1l-4 7c-3 4-11.700 3-11.700-4v-3" fill="none" stroke="#fff" stroke-width="1.300"/></svg></button>
        <button class="dark" aria-label="Chat"><svg width="18" height="20"><path d="M3 1.500h12a2 2 0 0 1 2 2V18l-4-3H3a2 2 0 0 1-2-2V3.500a2 2 0 0 1 2-2zM4.500 6h9M4.500 10h6" fill="none" stroke="#fff" stroke-width="1.300"/></svg></button>
        <button class="lit" aria-label="Účastníci"><svg width="18" height="20"><circle cx="4" cy="6" r="2.600"/><circle cx="13" cy="4" r="3"/><path d="M6 18H4c-2 0-3-1-3-3v-4h5M9 9.500h8V15c0 4-8 4-8 0z"/></svg></button>
        <button class="hang" aria-label="Zavěsit"><svg width="22" height="10"><path d="M1 8C0 1 6 0 11 0s11 1 10 8c-1 1-5 0-6-1V4.500c-2-1-6-1-8 0V7C6 8 2 9 1 8z" fill="#fff"/></svg></button>
      </div>
    </section>
    <aside class="people">
      <div class="p-head"><h2>Lidé</h2><button aria-label="Další"><svg width="16" height="4"><g fill="#333"><circle cx="2" cy="2" r="1.500"/><circle cx="8" cy="2" r="1.500"/><circle cx="14" cy="2" r="1.500"/></g></svg></button><button aria-label="Zavřít panel"><svg width="11" height="11"><path d="M.5.5l10 10M10.500.5l-10 10" stroke="#444"/></svg></button></div>
      <h3><i class="caret"></i>Momentálně na schůzce (8)</h3>
      <ul>
        <li><span class="face mb">MB</span><div>Michaela Boková (Host)</div><svg width="18" height="18"><use href="#mic-off"/></svg></li>
        <li><span class="face ad">AD</span><div>Alena Dostálová (Host)</div><svg width="18" height="18"><use href="#mic-off"/></svg></li>
        <li><span class="face jk">JK</span><div>Jana Klementová</div><svg width="18" height="18"><use href="#mic-off"/></svg></li>
        <li><span class="face js">JS</span><div>Jaroslava Sobotková (Guest)</div><svg width="18" height="18"><use href="#mic-off"/></svg></li>
        <li><span class="face pn ring">PN</span><div><b>Petra Novotná</b><small>Organizátor</small></div></li>
        <li><span class="face ps">PŠ</span><div>Petra Švecová (Host)</div><svg width="18" height="18"><use href="#mic-off"/></svg></li>
        <li><span class="face z">Z</span><div>Z.Vacková (Host)</div><svg width="18" height="18"><use href="#mic-off"/></svg></li>
        <li><span class="face zn ring">ZN</span><div><b>Zuzana Novotná (Host)</b></div></li>
      </ul>
    </aside>
  </main>

  <footer class="taskbar">
    <div class="apps-row">
      <div class="system">
        <button aria-label="Start"><svg width="16" height="16"><path d="M0 2l7-1v7H0zM8 1l8-1v8H8zM0 9h7v6l-7-1zM8 9h8v7l-8-1z" fill="#fff"/></svg></button>
        <button aria-label="Hledat"><svg width="16" height="16"><circle cx="10" cy="6" r="5" fill="none" stroke="#fff" stroke-width="1.300"/><path d="M6.500 9.500L.5 15.500" stroke="#fff" stroke-width="1.300"/></svg></button>
        <button aria-label="Cortana"><svg width="16" height="16"><circle cx="8" cy="8" r="6.500" fill="none" stroke="#fff" stroke-width="2"/></svg></button>
        <button aria-label="Zobrazení úkolů"><svg width="16" height="16"><path d="M1 4.500h9v6H1zM1 0v2.500h9V0M1 16v-2.500h9V16M14.500 0v4M14.500 8v8M13 6h3" fill="none" stroke="#fff" stroke-width="1.200"/></svg></button>
      </div>
      <button aria-label="Vzdálená plocha"><svg width="24" height="24"><path d="M0 0h24v18H0z" fill="#d8e4ee"/><path d="M1.500 1.500h21v15h-21z" fill="#1977d4"/><path d="M7 13c-2-5 2-9 5-9s7 4 5 9z" fill="#fff"/><path d="M10 18h4v3h4v2H6v-2h4z" fill="#ccc"/></svg></button>
      <button aria-label="TeamViewer"><svg width="24" height="24"><path d="M0 0h24v24H0z" fill="#1679dc"/><circle cx="12" cy="12" r="10" fill="#fff"/><path d="M2.500 12L8 8v2.500h8V8l5.500 4L16 16v-2.500H8V16z" fill="#1679dc"/></svg></button>
      <button class="run more" aria-label="Průzkumník"><svg width="24" height="24"><path d="M1 3h8l2 3h12v14H1z" fill="#f5b938"/><path d="M1 7h22v13H1z" fill="#fbd975"/><path d="M5 22v-9h14v9h-4v-5H9v5z" fill="#3c93d8"/></svg></button>
      <button class="run" aria-label="Outlook"><svg width="24" height="24"><path d="M8 1h15v13H8z" fill="#28a8ea"/><path d="M15 6h8v8h-8z" fill="#50d9ff"/><path d="M7 12l8 6 9-6v10H7z" fill="#0f78d4"/><rect y="6" width="13" height="13" rx="1" fill="#0a5ab0"/><circle cx="6.500" cy="12.500" r="3" fill="none" stroke="#fff" stroke-width="2"/></svg></button>
      <button aria-label="Excel"><svg width="24" height="24"><path d="M7 1h16v21H7z" fill="#21a366"/><path d="M7 12h16v10H7z" fill="#107c41"/><path d="M15 1h8v6h-8z" fill="#33c481"/><path d="M15 12h8v5h-8z" fill="#185c37"/><rect y="6" width="13" height="13" rx="1" fill="#107c41"/><path d="M4 9l5 7M9 9l-5 7" stroke="#fff" stroke-width="2"/></svg></button>
      <button aria-label="Kalkulačka"><svg width="18" height="24"><path d="M0 0h18v24H0z" fill="#8e9aa6"/><path d="M2 2h14v5H2z" fill="#68d0f0"/><path d="M2 9h3v3H2zM7 9h3v3H7zM12 9h4v3h-4zM2 14h3v3H2zM7 14h3v3H7zM2 19h8v3H2z" fill="#f4f4f4"/><path d="M12 14h4v8h-4z" fill="#1c4e88"/></svg></button>
      <button class="run" aria-label="Word"><svg width="24" height="24"><path d="M7 1h17v21H7z" fill="#2b7cd3"/><path d="M7 1h17v5H7z" fill="#41a5ee"/><path d="M7 12h17v10H7z" fill="#185abd"/><path d="M7 17h17v5H7z" fill="#103f91"/><rect y="6" width="13" height="13" rx="1" fill="#185abd"/><path d="M2.500 9L4.500 16l2-6 2 6 2-7" fill="none" stroke="#fff" stroke-width="1.500"/></svg></button>
      <button class="run" aria-label="PowerPoint"><svg width="24" height="24"><circle cx="13" cy="12" r="11" fill="#ed6c47"/><path d="M13 1a11 11 0 0 1 11 11H13z" fill="#ff8f6b"/><path d="M2 12h22a11 11 0 0 1-22 0z" fill="#d35230"/><rect y="6" width="13" height="13" rx="1" fill="#c43e1c"/><path d="M5 16V9.500h2a2 2 0 0 1 0 4H5" fill="none" stroke="#fff" stroke-width="1.500"/></svg></button>
      <button class="run front" aria-label="Chrome"><svg width="24" height="24"><circle cx="12" cy="12" r="11" fill="#34a853"/><path d="M12 12L2.500 6.500A11 11 0 0 1 21.500 6.500H12z" fill="#ea4335"/><path d="M12 6.500h9.500A11 11 0 0 1 12 23l5-9z" fill="#fbbc04"/><path d="M2.500 6.500L8 15l4-9z" fill="#ea4335"/><circle cx="12" cy="12" r="5.500" fill="#fff"/><circle cx="12" cy="12" r="4.300" fill="#4285f4"/></svg></button>
      <button aria-label="Edge"><svg width="24" height="24"><circle cx="12" cy="12" r="11.500" fill="#0f76c6"/><path d="M.5 11C2-2 22-3 23.500 11c0 6-9 6-9 3 3-4-2-8-6-7C5 8 3 9 .5 11z" fill="#3ccf8e"/><path d="M.5 11C2-1 18-3 22 6 17 2 6 3 .5 11z" fill="#2fb5d8"/><path d="M10 11c-3 5 3 11 11 8-3 3-6 4-9 4-6-2-8-9-2-12z" fill="#0a4f9c"/><path d="M12 10c4 0 1 4 3 6 3 1 6 1 8-1-3 4-13 4-13-1 0-2 1-3 2-4z" fill="#3a3226"/></svg></button>
      <button class="run" aria-label="Zoom"><svg width="24" height="24"><rect x="1" y="1" width="22" height="22" rx="6" fill="#4a8cff"/><path d="M5 8h8a2 2 0 0 1 2 2v6H7a2 2 0 0 1-2-2zM16 11l4-3v8l-4-3z" fill="#fff"/></svg></button>
      <button class="run" aria-label="Rychlé poznámky"><svg width="24" height="24"><path d="M1 1h22v11L13 23H1z" fill="#ffe100"/><path d="M12 23V12h11z" fill="#333"/></svg></button>
      <button class="run more" aria-label="Malování"><svg width="24" height="24"><path d="M1 14C1 5 12 2 17 7c5 6-3 7-1 11 1 4-15 7-15-4z" fill="#e4eef4" stroke="#9bb"/><circle cx="6" cy="11" r="2" fill="#e0312b"/><circle cx="11" cy="8" r="2" fill="#8bc34a"/><circle cx="5" cy="16" r="2" fill="#f2b01e"/><circle cx="10" cy="19" r="2" fill="#2a6fc4"/><path d="M11 15L20 4" stroke="#b5713a" stroke-width="2"/><path d="M18 5c0-4 2-4 4-5 0 3 0 5-3 7z" fill="#d79b62"/></svg></button>
    </div>
    <div class="tray">
      <svg width="14" height="8"><path d="M1 7l6-6 6 6" fill="none" stroke="#fff" stroke-width="1.500"/></svg>
      <svg width="16" height="14"><path d="M5 3h9.500v7H5M8 13h5M10.500 10v3" fill="none" stroke="#fff" stroke-width="1.300"/><path d="M1 5h6v5H1zM2 5V1h3v4" fill="#fff" stroke="#fff"/></svg>
      <svg width="16" height="16"><rect width="14" height="14" rx="4" fill="#0a9fb0"/><path d="M4 7h6c0-4-6-4-6 0s4 4 6 3" fill="none" stroke="#fff" stroke-width="1.500"/><circle cx="12" cy="11.500" r="3.500" fill="#3a8de0"/></svg>
      <svg width="16" height="16"><path d="M0 0h16v16H0z" fill="#000"/><g fill="none" stroke="#fff" stroke-width="1.500"><path d="M8 5c0-3 3-4 5-3M11 7c3-1 5 1 4 4M10 11c2 2 1 4-2 4M6 11c-1 3-4 3-5 1M5 8C2 7 1 4 3 3M6 5C4 3 6 1 8 1"/></g></svg>
      <svg width="16" height="12"><path d="M4 11a4 4 0 0 1-1-7 5 5 0 0 1 9-1 4 4 0 0 1 1 8z" fill="#2a94e8"/></svg>
      <svg width="16" height="12"><path d="M5 3.500h9v7H5zM15 5v4M2.500 0v3M0 1v3h4V1M2 4v3h2" fill="none" stroke="#fff"/><path d="M7 5h6v4H7z" fill="#fff"/></svg>
      <svg width="14" height="14"><path d="M1 13C1 6 6 1 13 1M4 13c0-5 4-9 9-9M7 13c0-3 3-6 6-6M10 13c0-2 1-3 3-3" fill="none" stroke="#ccc"/><circle cx="12" cy="12" r="1.500" fill="#fff"/></svg>
      <svg width="16" height="14"><path d="M1 5h2l4-4v12L3 9H1zM9 5c1 1 1 3 0 4M11 3c2 2 2 6 0 8" fill="none" stroke="#fff"/><path d="M13 1c3 3 3 9 0 12" fill="none" stroke="#777"/></svg>
      <div class="clock"><time>14:37</time><time>24.11.2020</time></div>
      <div class="notif"><svg width="16" height="16"><path d="M0 0h16v12h-4v4l-4-4H0z" fill="#fff"/><path d="M3 3.500h10M3 6h10M3 8.500h7" stroke="#222"/></svg><span>15</span></div>
    </div>
  </footer>
</div>
</body>
</html>
```
FILE: styles.css
```css
* { box-sizing: border-box; }
body { margin: 0; background: #fff; font-family: "Open Sans", "Noto Sans", sans-serif; font-size: 12px; color: #252423; }
button { font: inherit; color: inherit; background: none; border: 0; padding: 0; margin: 0; }
svg { display: block; flex: none; }
h2, h3, p, ul, ol { margin: 0; padding: 0; list-style: none; }
.defs { width: 0; height: 0; position: absolute; }
.desktop { width: 96%; display: flex; flex-direction: column; }
.caret { display: inline-block; width: 0; height: 0; border: 3px solid transparent; border-top-color: #777; border-bottom: 0; vertical-align: middle; }
.caret.far { margin-left: 4px; }

/* browser */
.tabstrip { display: flex; align-items: center; height: 34px; background: #dee1e6; }
.tab { display: flex; align-items: center; gap: 8px; width: 247px; height: 34px; padding: 0 12px 0 20px; color: #45494d; }
.tab.active { width: 240px; padding-left: 12px; background: #fff; border-radius: 8px 8px 0 0; }
.tab-title { flex: 1; white-space: nowrap; }
.rec { margin-right: 4px; }
.newtab { margin-left: 16px; }
.wincontrols { display: flex; margin-left: auto; padding: 0 17px 6px 0; gap: 35px; }
.toolbar { display: flex; align-items: center; height: 35px; padding: 0 20px 0 14px; }
.navs { display: flex; gap: 17px; width: 94px; }
.omnibox { flex: 1; display: flex; align-items: center; height: 28px; padding: 0 11px 0 13px; background: #f1f3f4; border-radius: 14px; }
.url { flex: 1; min-width: 0; margin-left: 11px; padding: 0; border: 0; font: 13px "Noto Sans", sans-serif; color: transparent; background: linear-gradient(90deg, #202124 128px, #5f6368 128px); -webkit-background-clip: text; background-clip: text; }
.star { margin-left: 18px; }
.profile { margin: 0 20px 0 13px; }
.bookmarks { display: flex; align-items: center; height: 34px; padding: 0 15px 4px; border-bottom: 1px solid #c9cbce; overflow: hidden; }
.bookmarks a { display: flex; align-items: center; gap: 8px; width: 154px; color: #3c4043; text-decoration: none; white-space: nowrap; font-size: 11px; }
.bookmarks .apps { width: 84px; gap: 10px; }

/* meeting */
.meeting { display: flex; }
.stage { position: relative; flex: 1; min-width: 0; background: #000; padding-top: 6px; }
.share { margin: 0 21px 0 20px; background: #fdfdfd; color: #444; }
.pp-title { display: flex; align-items: center; justify-content: space-between; height: 24px; padding: 0 8px; }
.qat { display: flex; align-items: center; gap: 11px; width: 340px; }
.pp-name { font-size: 12px; }
.pp-win { display: flex; align-items: center; justify-content: flex-end; gap: 16px; width: 340px; }
.q { font-weight: 600; }
.pp-tabs { display: flex; gap: 1px; height: 25px; border-bottom: 1px solid #d8d8d8; font-size: 12px; }
.pp-tabs button { padding: 0 11px; }
.pp-tabs .file { width: 59px; padding: 0; background: #e04e1f; color: #fff; margin-right: 3px; }
.pp-tabs .on { height: 25px; background: #fff; color: #d9502a; border: 1px solid #d8d8d8; border-bottom: 0; padding: 0 9px; }
.user { display: flex; align-items: center; gap: 4px; margin-left: auto; padding-right: 8px; }
.user svg { margin-left: 1px; }
.ribbon { display: flex; position: relative; height: 92px; border-bottom: 2px solid #dcdcdc; padding-top: 4px; }
.group { display: flex; flex-direction: column; border-right: 1px solid #dedede; height: 85px; }
.group footer { position: relative; margin-top: auto; text-align: center; font-size: 10px; line-height: 14px; color: #666; }
.launch { position: absolute; right: 4px; top: 4px; }
.cols { display: flex; height: 68px; }
.g-clip { width: 167px; padding-left: 8px; }
.g-slides { width: 145px; padding-left: 2px; }
.g-font { width: 213px; padding-left: 3px; }
.g-para { width: 345px; padding-left: 8px; }
.g-draw { width: 358px; padding-left: 4px; }
.g-edit { width: 93px; padding-left: 7px; }
.big { display: flex; flex-direction: column; align-items: center; width: 32px; line-height: 16px; padding-top: 2px; }
.big svg { margin-bottom: 4px; }
.big .caret { margin-top: 4px; }
.big.two { width: 52px; text-align: center; white-space: nowrap; }
.big.two .caret { margin: 0; }
.big.arrange { width: 64px; }
.list { display: flex; flex-direction: column; justify-content: space-around; white-space: nowrap; margin-left: 3px; }
.g-clip .list { margin-left: 7px; }
.g-para .list { margin-left: auto; margin-right: 4px; }
.g-edit .list { margin-left: 0; }
.list button { display: flex; align-items: center; gap: 3px; height: 22px; }
.g-slides .list button, .g-para .list button { gap: 2px; }
.dim { color: #a6a6a6; }
.dim .caret { border-top-color: #aaa; }
.rows { display: flex; flex-direction: column; gap: 9px; padding-top: 8px; }
.r { display: flex; align-items: center; height: 21px; gap: 5px; }
.r2 { gap: 9px; padding-left: 6px; }
.r2 .caret { margin-left: -5px; }
.r3 { gap: 8px; }
.bar { width: 1px; height: 18px; background: #ddd; }
.font, .size { appearance: none; height: 22px; border: 1px solid #dcdcdc; background: #fff linear-gradient(135deg, #fff, #fff); color: #a6a6a6; font: 12px "Open Sans", sans-serif; width: 97px; padding: 0 0 0 2px; background: conic-gradient(from -45deg at 50% 100%, #aaa 90deg, transparent 0) right 4px center / 6px 3px no-repeat #fff; background: conic-gradient(from 135deg at 50% 0, transparent 0, transparent 0) #fff; }
.font, .size { background: conic-gradient(from 135deg at 50% 100%, #fff 0) #fff; background: linear-gradient(to bottom left, transparent 50%, #aaa 50%) right 7px center / 3px 3px no-repeat, linear-gradient(to bottom right, transparent 50%, #aaa 50%) right 4px center / 3px 3px no-repeat, #fff; background: linear-gradient(to top right, transparent 50%, #aaa 50%) right 7px center / 3px 3px no-repeat, linear-gradient(to top left, transparent 50%, #aaa 50%) right 4px center / 3px 3px no-repeat, #fff; }
.size { width: 38px; margin-left: -5px; padding: 0 0 0 1px; }
.ic { width: 16px; font-size: 14px; }
.ic.sm { font-size: 12px; }
.ic sup { font-size: 9px; line-height: 0; }
.av { text-decoration: underline; }
.big-a { font-size: 14px; }
.gallery { margin-top: 2px; }
.g-draw .list { margin-left: 0; }
.collapse { margin: auto 8px 5px auto; }

/* editor */
.work { display: flex; background: linear-gradient(#fcfcfc, #f4f3f5 45%, #f0eff1); border-bottom: 1px solid #c8c8c8; }
.thumbs { position: relative; width: 217px; contain: size; overflow: hidden; }
.thumbs li { display: flex; gap: 5px; height: 115px; padding: 0 20px 0 11px; }
.thumbs ol { padding-top: 18px; }
.thumbs span { width: 10px; font-size: 15px; line-height: 11px; color: #555; }
.thumbs li svg { width: 170px; height: 98px; background: #fff; border: 1px solid #c4c4c4; }
.thumbs li svg.hover { border: 2px solid #888; }
.thumbs .sel svg { border: 2px solid #cc5632; }
.thumbs .sel span { color: #cc5632; }
.th { font-size: 7px; fill: #555; }
.ts { font-size: 3px; font-weight: 700; fill: #222; }
.tm { font-size: 4px; font-weight: 700; fill: #222; }
.cursor { position: absolute; left: 137px; top: 85px; }
.vscroll { display: flex; flex-direction: column; align-items: center; width: 16px; background: #eaeaec; border-right: 1px solid #ddd; }
.vscroll button { display: grid; place-items: center; width: 15px; height: 16px; background: #fff; border: 1px solid #c8c8c8; }
.vscroll .grip { width: 15px; height: 335px; margin-top: 57px; background: #fff; border: 1px solid #c4c4c4; }
.vscroll .end { margin-top: auto; }
.vscroll.left { width: 20px; padding-right: 4px; }
.vscroll.right { border: 0; padding: 1px 0 27px; }
.vscroll.right .grip { height: 54px; margin-top: 106px; }
.vscroll .pg { margin-top: 6px; }
.canvas { flex: 1; padding: 12px 79px 16px; }
.slide { width: 100%; height: auto; outline: 1px solid #cfcfd2; }
.ghost { font-family: Lato, sans-serif; font-size: 84px; fill: #ededee; text-anchor: middle; font-weight: 300; }
.shade { fill: #888; fill-opacity: .4; }
.grid { fill: none; stroke: #555; }
.s-id { font: 700 24px "Liberation Sans", sans-serif; }
.s-mod { font: 700 30px Lato, sans-serif; }
.s-h { font: 700 22px Lato, sans-serif; }
.lab { font: 17px Lato, sans-serif; text-anchor: middle; fill: #222; }
.lab.end { text-anchor: end; }
.status { display: flex; align-items: center; gap: 16px; height: 21px; padding: 0 5px 0 7px; background: #e0541f; color: #fff; font-size: 10px; }
.st-right { display: flex; align-items: center; margin-left: auto; }
.st-right button { display: flex; align-items: center; gap: 5px; height: 21px; }
.notes { margin-right: 18px; }
.comments { margin-right: 16px; }
.st-right .comments { margin-right: 14px; }
.st-right .notes { margin-right: 16px; }
.view { justify-content: center; width: 33px; }
.view.on { background: #b84318; }
.pm { width: 9px; height: 2px; background: #fff; }
.plus { background: linear-gradient(#fff, #fff) center / 9px 2px no-repeat, linear-gradient(#fff, #fff) center / 2px 9px no-repeat; height: 9px; }
.minus { margin-left: 4px; }
.zoom { appearance: none; width: 102px; height: 12px; margin: 0 3px; background: linear-gradient(#f5c0aa, #f5c0aa) center / 100% 1px no-repeat; }
.zoom::-webkit-slider-thumb { appearance: none; width: 4px; height: 12px; background: #fff; }
.pct { margin: 0 13px 0 14px; }
.sharer { position: absolute; left: 32px; bottom: 110px; color: #fff; font-size: 11px; line-height: 16px; text-shadow: 0 0 2px #000, 1px 1px 1px #000; }

/* avatars */
.face { display: grid; place-items: center; flex: none; width: 32px; height: 32px; border-radius: 50%; font-size: 12px; font-weight: 600; }
.mb { background: #d6e3e8; color: #3b5a66; }
.ad { background: #c8d4e8; color: #1c2f5e; }
.jk, .z { background: #dbe0d8; color: #47523a; }
.js { background: #cfebdd; color: #2f6048; }
.pn { background: #fde8d3; color: #8a5d24; }
.ps { background: #e2deed; color: #4f4663; }
.zn { background: #d9eff1; color: #3b7478; }
.people .ring { outline: 2px solid #a6a7ee; outline-offset: 2px; }
.filmstrip { display: flex; align-items: center; justify-content: flex-end; height: 94px; background: #1b1a1b; }
.filmstrip .face { width: 42px; height: 42px; margin: 0 21px; font-size: 16px; }
.filmstrip .ring { outline: 3px solid #9ea2ff; outline-offset: 2px; }
.speaker { width: 180px; height: 94px; padding: 26px 15px 0; background: radial-gradient(circle at 50% 45%, #5c5b90 10%, #48476a 35%, #3a3848 65%); display: flex; flex-direction: column; }
.filmstrip .speaker .face { margin: 0 auto; }
.speaker p { margin-top: 9px; color: #fff; font-size: 11px; line-height: 16px; text-shadow: 0 1px 2px #000; }

/* call controls float over the shared screen */
.tip { position: absolute; left: 837px; bottom: 203px; width: 178px; height: 32px; line-height: 32px; text-align: center; background: #5b5b5b; color: #fff; border-radius: 3px; font-size: 13px; white-space: nowrap; }
.callbar { position: absolute; left: 683px; bottom: 130px; display: flex; height: 52px; border-radius: 3px; overflow: hidden; background: #464445; box-shadow: 0 3px 10px rgba(0,0,0,.55); }
.callbar button, .time { display: grid; place-items: center; width: 52px; height: 52px; }
.time { width: 69px; color: #a3a1a1; font-weight: 600; font-size: 13px; border-right: 1px solid #1d1c1c; }
.callbar .dark { background: #3c3a3b; }
.callbar .lit { background: radial-gradient(ellipse at 50% 105%, #6263a5, #3d3d5d 60%); }
.lit svg { fill: none; stroke: #fff; stroke-width: 1.3px; }
.callbar .hang { background: #9b2c41; }

/* participants */
.people { width: 320px; padding: 37px 27px 0 21px; background: #fff; font-size: 13px; }
.p-head { display: flex; align-items: center; gap: 22px; height: 26px; padding-right: 3px; }
h2 { flex: 1; font-size: 17px; font-weight: 700; }
h3 { position: relative; margin-top: 28px; line-height: 20px; font-size: 13px; font-weight: 400; color: #484644; }
h3 .caret { position: absolute; left: -15px; top: 9px; border-top-color: #aaa; }
.people ul { padding-top: 9px; }
.people li { display: flex; align-items: center; gap: 12px; height: 48px; }
.people li div { flex: 1; white-space: nowrap; }
b, small { display: block; }
small { font-size: 12px; color: #6b6968; }
.people b { line-height: 19px; }

/* taskbar */
.taskbar { display: flex; justify-content: space-between; height: 40px; color: #fff; background: linear-gradient(90deg, #34302a, #33302b 12%, #363431 25%, #383129 50%, #2f2b20 65%, #1e211d 85%, #1e2020); }
.apps-row { display: flex; }
.system { display: flex; width: 194px; }
.apps-row button { display: grid; place-items: center; width: 49px; height: 40px; }
.system button { width: 48px; }
.apps-row .run { background: linear-gradient(#76b4e6, #76b4e6) center bottom / 40px 2px no-repeat; }
.apps-row .front { background: linear-gradient(#76b4e6, #76b4e6) center bottom / 100% 2px no-repeat, #63605c; }
.tray { display: flex; align-items: center; gap: 8px; padding-right: 4px; }
.tray > svg { margin-top: -1px; }
.clock { display: flex; flex-direction: column; align-items: center; width: 58px; font-size: 11px; line-height: 18px; }
.notif { position: relative; width: 46px; height: 40px; padding: 12px 0 0 10px; border-right: 1px solid #777; }
.notif span { position: absolute; left: 16px; top: 17px; width: 18px; height: 18px; border-radius: 50%; border: 1px solid #999; background: #333; font-size: 10px; line-height: 16px; text-align: center; }
```
